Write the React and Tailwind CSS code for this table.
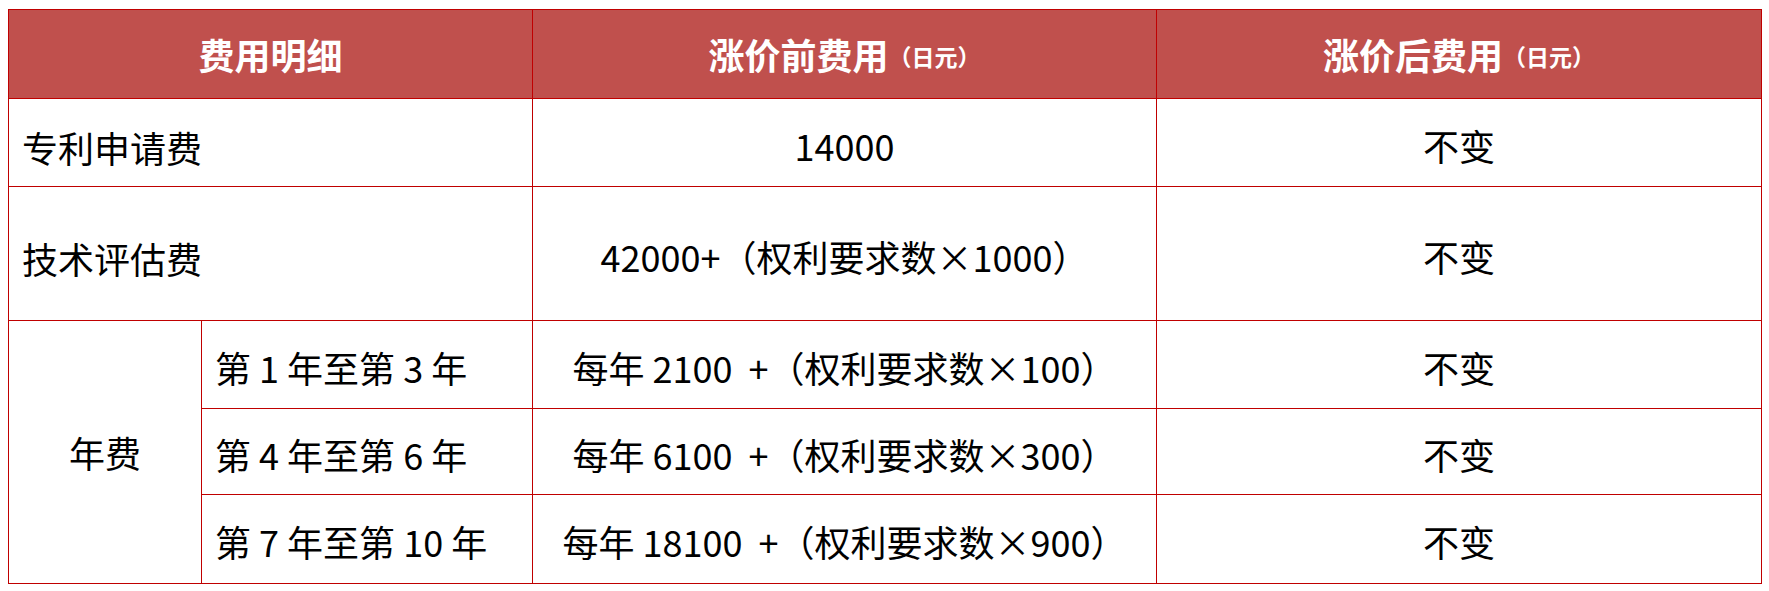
const font = { fontFamily: '"Noto Sans CJK SC", "Noto Sans", sans-serif' }

const yearRows = [
  { label: '第 1 年至第 3 年', fee: '每年 2100\u00a0 +（权利要求数×100）' },
  { label: '第 4 年至第 6 年', fee: '每年 6100\u00a0 +（权利要求数×300）' },
  { label: '第 7 年至第 10 年', fee: '每年 18100\u00a0 +（权利要求数×900）' },
]

function HeadCell({ title, span }) {
  return (
    <div
      className={`bg-[#c0504d] text-white font-bold flex items-center justify-center ${
        span ? 'col-span-2' : ''
      }`}
    >
      <span className="text-[36px] leading-none">{title}</span>
      {title !== '费用明细' && (
        <span className="text-[23px] leading-none pt-[4px]">（日元）</span>
      )}
    </div>
  )
}

function App() {
  return (
    <div className="w-[1769px] h-[591px] bg-white pt-[9px] pl-[8px]" style={font}>
      <div className="grid w-[1754px] grid-cols-[192px_330px_623px_604px] grid-rows-[88px_87px_133px_87px_85px_88px] gap-px p-px bg-[#c00000] text-black text-[36px] leading-none">
        <HeadCell title="费用明细" span />
        <HeadCell title="涨价前费用" />
        <HeadCell title="涨价后费用" />

        <div className="col-span-2 bg-white flex items-center pl-[13px] pt-[8px]">专利申请费</div>
        <div className="bg-white flex items-center justify-center pt-[4px]">14000</div>
        <div className="bg-white flex items-center justify-center pt-[4px]">不变</div>

        <div className="col-span-2 bg-white flex items-center pl-[13px] pt-[8px]">技术评估费</div>
        <div className="bg-white flex items-center justify-center pt-[4px]">42000+（权利要求数×1000）</div>
        <div className="bg-white flex items-center justify-center pt-[4px]">不变</div>

        <div className="row-span-3 bg-white flex items-center justify-center">年费</div>
        {yearRows.map((row) => (
          <div key={row.label} className="contents">
            <div className="bg-white flex items-center pl-[13px] pt-[4px]">{row.label}</div>
            <div className="bg-white flex items-center justify-center pt-[4px]">{row.fee}</div>
            <div className="bg-white flex items-center justify-center pt-[4px]">不变</div>
          </div>
        ))}
      </div>
    </div>
  )
}

export default App
